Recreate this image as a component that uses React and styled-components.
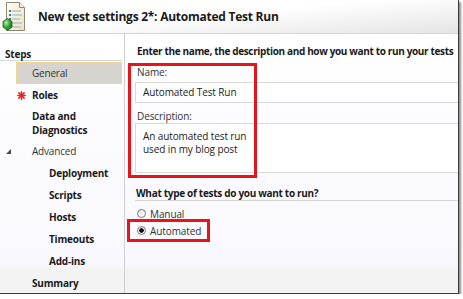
import React from "react";
import styled, { createGlobalStyle } from "styled-components";

const GlobalStyle = createGlobalStyle`
  html, body {
    margin: 0;
    padding: 0;
    background: #ffffff;
  }
  body {
    font-family: "Open Sans", "Noto Sans", sans-serif;
    color: #1e1e1e;
  }
`;

const steps = [
  { label: "General", level: 1, selected: true },
  { label: "Roles", level: 1, bold: true, marker: "star" },
  { label: ["Data and", "Diagnostics"], level: 1, bold: true },
  { label: "Advanced", level: 1, marker: "arrow" },
  { label: "Deployment", level: 2, bold: true },
  { label: "Scripts", level: 2, bold: true },
  { label: "Hosts", level: 2, bold: true },
  { label: "Timeouts", level: 2, bold: true },
  { label: "Add-ins", level: 2, bold: true },
  { label: "Summary", level: 1, bold: true },
];

function SettingsIcon() {
  return (
    <svg width="26" height="31" viewBox="0 0 26 31">
      <defs>
        <linearGradient id="page" x1="0" y1="0" x2="1" y2="1">
          <stop offset="0" stopColor="#fffdf0" />
          <stop offset="1" stopColor="#eee2b8" />
        </linearGradient>
        <radialGradient id="gem" cx="0.35" cy="0.35" r="0.7">
          <stop offset="0" stopColor="#b8f0a8" />
          <stop offset="0.5" stopColor="#3fae3a" />
          <stop offset="1" stopColor="#1d6b1e" />
        </radialGradient>
      </defs>
      <path d="M5.5 1.5 H18.5 L23.5 6.5 V29.5 H5.5 Z" fill="url(#page)" stroke="#8d8a7c" />
      <path d="M18.5 1.5 V6.5 H23.5" fill="#f4f1e6" stroke="#8d8a7c" />
      <g fill="#3a73c8">
        <rect x="8" y="9" width="2" height="2" />
        <rect x="8" y="13" width="2" height="2" />
        <rect x="8" y="17" width="2" height="2" />
        <rect x="8" y="21" width="2" height="2" />
        <rect x="8" y="25" width="2" height="2" />
      </g>
      <g fill="#8fb0dc">
        <rect x="11" y="9.5" width="9" height="1" />
        <rect x="11" y="13.5" width="10" height="1" />
        <rect x="11" y="17.5" width="8" height="1" />
        <rect x="11" y="21.5" width="10" height="1" />
        <rect x="11" y="25.5" width="9" height="1" />
      </g>
      <path d="M6.5 17.5 L11 20.5 V26 L6.5 29.5 L2 26 V20.5 Z" fill="url(#gem)" stroke="#1d5e1f" strokeWidth="0.8" />
    </svg>
  );
}

function StarMark() {
  return (
    <svg width="9" height="9" viewBox="0 0 9 9">
      <g stroke="#e3262b" strokeWidth="1.6" strokeLinecap="round">
        <line x1="4.5" y1="0.8" x2="4.5" y2="8.2" />
        <line x1="0.8" y1="4.5" x2="8.2" y2="4.5" />
        <line x1="1.9" y1="1.9" x2="7.1" y2="7.1" />
        <line x1="7.1" y1="1.9" x2="1.9" y2="7.1" />
      </g>
    </svg>
  );
}

export default function App() {
  return (
    <>
      <GlobalStyle />
      <Window>
        <TitleBar>
          <SettingsIcon />
          <Title>New test settings 2*: Automated Test Run</Title>
        </TitleBar>
        <Body>
          <Sidebar>
            <StepsHeader>Steps</StepsHeader>
            {steps.map((step, i) => (
              <StepRow key={i} $level={step.level} $selected={step.selected} $bold={step.bold}>
                <Gutter $level={step.level} $selected={step.selected}>
                  {step.marker === "star" && <StarMark />}
                  {step.marker === "arrow" && <Arrow />}
                </Gutter>
                <StepLabel>
                  {Array.isArray(step.label)
                    ? step.label.map((l) => <div key={l}>{l}</div>)
                    : step.label}
                </StepLabel>
              </StepRow>
            ))}
          </Sidebar>
          <Main>
            <Heading>Enter the name, the description and how you want to run your tests</Heading>
            <FieldLabel>Name:</FieldLabel>
            <TextInput>Automated Test Run</TextInput>
            <FieldLabel $gap>Description:</FieldLabel>
            <TextArea>
              An automated test run
              <br />
              used in my blog post
            </TextArea>
            <SectionHeading>What type of tests do you want to run?</SectionHeading>
            <RadioGroup>
              <RadioRow>
                <Radio />
                Manual
              </RadioRow>
              <RadioRow>
                <Radio $checked />
                Automated
              </RadioRow>
            </RadioGroup>
            <Highlight style={{ left: 3, top: 29, width: 129, height: 115 }} />
            <Highlight style={{ left: 2, top: 185, width: 83, height: 23 }} />
          </Main>
        </Body>
      </Window>
    </>
  );
}

const Window = styled.div`
  width: 459px;
  height: 294px;
  display: flex;
  flex-direction: column;
  box-sizing: border-box;
  border-right: 1px solid #3c3c3c;
  border-bottom: 1px solid #3c3c3c;
  box-shadow: 2px 2px 2px rgba(0, 0, 0, 0.45);
  overflow: hidden;
`;

const TitleBar = styled.div`
  height: 33px;
  flex: none;
  display: flex;
  align-items: center;
  gap: 11px;
  padding-left: 1px;
  border-bottom: 1px solid #d6d6d6;
  background: linear-gradient(175deg, #ffffff 45%, #e4e4e4 100%);
  svg {
    flex: none;
    margin-top: -1px;
  }
`;

const Title = styled.div`
  font-size: 12px;
  font-weight: 700;
  color: #1a1a1a;
  letter-spacing: -0.25px;
`;

const Body = styled.div`
  flex: 1;
  display: flex;
  background: linear-gradient(#ffffff 0, #f8f8fe 230px, #f3f3f3 236px, #f3f3f3 100%);
`;

const Sidebar = styled.div`
  width: 124px;
  flex: none;
  border-right: 1px solid #cfcfcf;
  font-size: 10px;
  letter-spacing: -0.2px;
`;

const StepsHeader = styled.div`
  height: 27px;
  box-sizing: border-box;
  padding: 13px 0 0 5px;
  line-height: 14px;
  font-weight: 700;
  border-bottom: 1px solid #cddbea;
  margin-right: 2px;
`;

const StepRow = styled.div`
  display: flex;
  align-items: center;
  min-height: 22px;
  box-sizing: border-box;
  padding: 3px 0;
  line-height: 14px;
  font-weight: ${(p) => (p.$bold ? 700 : 400)};
  color: ${(p) => (p.$bold ? "#1a1a1a" : "#333333")};
  ${(p) =>
    p.$selected &&
    `
    margin: 1px 2px 0 16px;
    background: #d7d4cf;
    border: 1px solid #f2d68c;
  `}
`;

const Gutter = styled.div`
  flex: none;
  width: ${(p) => (p.$selected ? 15 : p.$level === 2 ? 49 : 32)}px;
  display: flex;
  align-items: center;
  padding-left: 4px;
  box-sizing: border-box;
  svg {
    margin-left: 13px;
  }
`;

const Arrow = styled.span`
  width: 0;
  height: 0;
  margin-left: 2px;
  margin-top: 1px;
  border-right: 5px solid #4a4a4a;
  border-top: 5px solid transparent;
`;

const StepLabel = styled.div``;

const Main = styled.div`
  position: relative;
  flex: 1;
  display: flex;
  flex-direction: column;
  padding: 10px 0 0 10px;
  font-size: 10px;
  letter-spacing: -0.1px;
`;

const Heading = styled.div`
  padding-left: 2px;
  line-height: 14px;
  font-size: 10px;
  font-weight: 700;
  letter-spacing: -0.35px;
  color: #1a1a1a;
  white-space: nowrap;
`;

const FieldLabel = styled.div`
  padding-left: 2px;
  margin-top: ${(p) => (p.$gap ? 7 : 8)}px;
  line-height: 13px;
  color: #333333;
`;

const TextInput = styled.div`
  height: 21px;
  margin-top: 3px;
  box-sizing: border-box;
  border: 1px solid #d9d9d9;
  border-right: none;
  background: #ffffff;
  padding-left: 7px;
  line-height: 19px;
  color: #222222;
`;

const TextArea = styled(TextInput)`
  height: 50px;
  margin-top: 0;
  padding-top: 6px;
  line-height: 13px;
`;

const SectionHeading = styled.div`
  margin-top: 14px;
  padding-left: 1px;
  line-height: 13px;
  font-size: 10px;
  font-weight: 700;
  letter-spacing: -0.3px;
  color: #1a1a1a;
  border-bottom: 1px solid #d4d4d4;
`;

const RadioGroup = styled.div`
  display: flex;
  flex-direction: column;
  margin-top: 4px;
`;

const RadioRow = styled.div`
  display: flex;
  align-items: center;
  gap: 4px;
  height: 17px;
  padding-left: 2px;
  color: #333333;
`;

const Radio = styled.span`
  width: 9px;
  height: 9px;
  box-sizing: border-box;
  border-radius: 50%;
  border: 1px solid #7a7a7a;
  background: ${(p) =>
    p.$checked
      ? "radial-gradient(circle, #111 0 2px, #f4f4f4 2.5px)"
      : "linear-gradient(135deg, #e2e2e2, #ffffff)"};
`;

const Highlight = styled.div`
  position: absolute;
  box-sizing: border-box;
  border: 3px solid #e8141c;
  pointer-events: none;
`;
